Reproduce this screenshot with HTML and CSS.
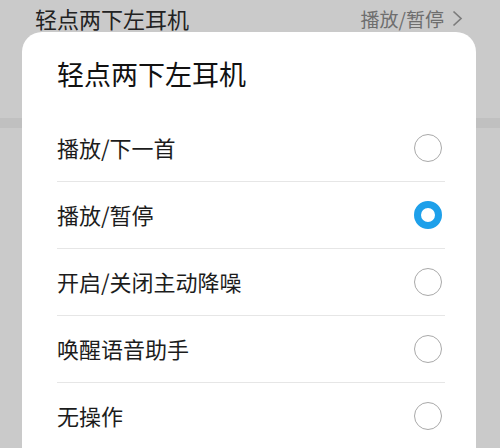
FILE: index.html
```html
<!DOCTYPE html>
<html lang="zh-CN">
<head>
    <meta charset="UTF-8">
    <meta name="viewport" content="width=device-width, initial-scale=1.0">
    <title>轻点两下左耳机</title>
    <link rel="stylesheet" href="styles.css">
</head>
<body>
    <div class="screen">
        <div class="setting-row">
            <span class="setting-name">轻点两下左耳机</span>
            <span class="setting-value">播放/暂停
                <svg class="chevron" width="11" height="17" viewBox="0 0 11 17">
                    <polyline points="1.5,1.5 9,8.5 1.5,15.5" fill="none" stroke="#7c7c7c" stroke-width="1.7"/>
                </svg>
            </span>
        </div>
        <div class="setting-divider"></div>

        <div class="dialog">
            <h2 class="dialog-title">轻点两下左耳机</h2>
            <ul class="options">
                <li class="option"><span>播放/下一首</span><span class="radio"></span></li>
                <li class="option"><span>播放/暂停</span><span class="radio checked"></span></li>
                <li class="option"><span>开启/关闭主动降噪</span><span class="radio"></span></li>
                <li class="option"><span>唤醒语音助手</span><span class="radio"></span></li>
                <li class="option"><span>无操作</span><span class="radio"></span></li>
            </ul>
        </div>
    </div>
</body>
</html>
```

FILE: styles.css
```css
body {
    margin: 0;
    font-family: "Noto Sans CJK SC", "Noto Sans", sans-serif;
    background-color: #cacaca;
    overflow: hidden;
}
.screen {
    position: relative;
    width: 500px;
    height: 448px;
    overflow: hidden;
}
.setting-row {
    display: flex;
    align-items: center;
    justify-content: space-between;
    height: 36px;
    padding: 0 37px 0 35px;
}
.setting-name {
    font-size: 22px;
    color: #222;
}
.setting-value {
    display: flex;
    align-items: center;
    gap: 8px;
    font-size: 19px;
    color: #6e6e6e;
}
.setting-divider {
    height: 10px;
    margin-top: 82px;
    background-color: #c0c0c0;
}
.dialog {
    position: absolute;
    top: 32px;
    left: 22px;
    width: 454px;
    height: 440px;
    background-color: white;
    border-radius: 20px;
}
.dialog-title {
    margin: 0;
    padding: 25px 0 0 35px;
    font-size: 27px;
    line-height: 34px;
    font-weight: normal;
    color: #111;
}
.options {
    list-style: none;
    margin: 24px 31px 0 35px;
    padding: 0;
}
.option {
    display: flex;
    align-items: center;
    justify-content: space-between;
    height: 66px;
    padding-right: 3px;
    border-bottom: 1px solid #e6e6e6;
    font-size: 22px;
    line-height: 28px;
    color: #1c1c1c;
}
.option span:first-child {
    margin-top: -2px;
}
.option:last-child {
    border-bottom: none;
}
.radio {
    width: 28px;
    height: 28px;
    box-sizing: border-box;
    border: 1.5px solid #a9a9a9;
    border-radius: 50%;
}
.radio.checked {
    border: 7px solid #1ea0ea;
}
```
